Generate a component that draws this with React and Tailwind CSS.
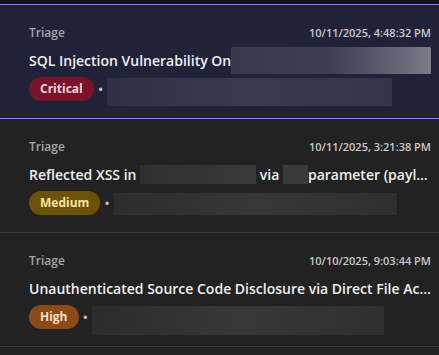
import React from 'react';

const badgeStyles = {
  Critical: 'bg-[#7a1327] text-[#f6d7dc]',
  Medium: 'bg-[#6c5205] text-[#f6e3a6]',
  High: 'bg-[#8c4a14] text-[#f9dfc8]',
};

// blurred/redacted chunk of text
function Redacted({ className }) {
  return <span className={`inline-block shrink-0 rounded-[1px] ${className}`} />;
}

function FindingCard({ active, time, title, severity, metaBox }) {
  return (
    <div
      className={`pl-[29px] pr-2 pt-5 pb-[17px] ${
        active
          ? 'bg-[#20223a] border-y border-[#7f88f0]'
          : 'bg-[#222222] border-b border-[#3b3b3b]'
      }`}
    >
      <div className="flex items-center justify-between h-4">
        <span className="text-[12px] font-semibold text-[#a6a6ac]">Triage</span>
        <span className="text-[11px] font-semibold text-[#cacaca]">{time}</span>
      </div>
      <div className="flex items-center h-5 mt-[9px] text-[14px] font-semibold text-[#efefef] whitespace-nowrap">
        {title}
      </div>
      <div className="flex items-center h-6 mt-[7px]">
        <span
          className={`h-6 px-[11px] rounded-full flex items-center text-[12px] font-bold ${badgeStyles[severity]}`}
        >
          {severity}
        </span>
        <span className="ml-[4px] mr-[4px] text-[#c4c4c4] text-[15px] leading-none">•</span>
        {metaBox}
      </div>
    </div>
  );
}

export default function App() {
  return (
    <div
      className="w-[439px] h-[355px] overflow-hidden bg-[#222222]"
      style={{ fontFamily: '"Open Sans", "Noto Sans", sans-serif' }}
    >
      <div className="h-1 bg-[#141414]" />
      <FindingCard
        active
        time="10/11/2025, 4:48:32 PM"
        severity="Critical"
        title={
          <>
            <span>SQL Injection Vulnerability On</span>
            <Redacted className="h-[27px] w-[200px] bg-gradient-to-r from-[#383a4c] via-[#3d3f52] to-[#7a7b88]" />
          </>
        }
        metaBox={
          <Redacted className="h-[28px] w-[285px] mt-[6px] bg-gradient-to-r from-[#2f3043] via-[#3a3b4e] to-[#34354a]" />
        }
      />
      <FindingCard
        time="10/11/2025, 3:21:38 PM"
        severity="Medium"
        title={
          <>
            <span>Reflected XSS in&nbsp;</span>
            <Redacted className="h-[19px] w-[116px] bg-gradient-to-r from-[#303030] to-[#3a3a3a]" />
            <span>&nbsp;via&nbsp;</span>
            <Redacted className="h-[19px] w-[25px] bg-[#3a3a3a]" />
            <span className="min-w-0 truncate">parameter (payload…</span>
          </>
        }
        metaBox={
          <Redacted className="h-[22px] w-[283px] mt-[2px] bg-gradient-to-r from-[#2d2d2d] via-[#383838] to-[#303030]" />
        }
      />
      <FindingCard
        time="10/10/2025, 9:03:44 PM"
        severity="High"
        title={
          <span className="min-w-0 truncate">Unauthenticated Source Code Disclosure via Direct File Access</span>
        }
        metaBox={
          <Redacted className="h-[29px] w-[292px] mt-[6px] bg-gradient-to-r from-[#2c2c2c] via-[#383838] to-[#303030]" />
        }
      />
    </div>
  );
}
